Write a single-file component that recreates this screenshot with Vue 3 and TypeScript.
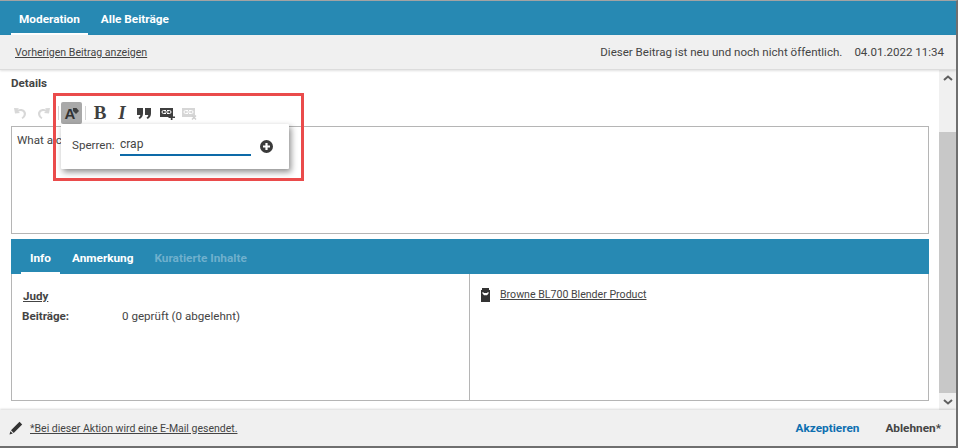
<script setup lang="ts">
const topTabs = [
  { label: 'Moderation', active: true },
  { label: 'Alle Beiträge', active: false },
]

const infoTabs = [
  { label: 'Info', active: true, disabled: false },
  { label: 'Anmerkung', active: false, disabled: false },
  { label: 'Kuratierte Inhalte', active: false, disabled: true },
]
</script>

<template>
  <div class="window">
    <header class="top-tabs">
      <a
        v-for="tab in topTabs"
        :key="tab.label"
        class="top-tab"
        :class="{ active: tab.active }"
      >{{ tab.label }}</a>
    </header>

    <div class="sub-bar">
      <a class="prev-link">Vorherigen Beitrag anzeigen</a>
      <div class="status">
        <span>Dieser Beitrag ist neu und noch nicht öffentlich.</span>
        <span>04.01.2022 11:34</span>
      </div>
    </div>

    <div class="scroll-area">
      <main class="content">
        <h2 class="details-title">Details</h2>

        <div class="toolbar">
          <button class="tool dim">
            <svg width="16" height="16" viewBox="0 0 16 16"><path d="M1 3l5 .2-1.500 1.500c1-.5 2-.7 3.200-.7 3.300 0 5.300 2.200 5.300 4.800 0 2.200-1.400 3.900-3.500 5.200l-1-1.400c1.300-.9 2.300-2 2.300-3.600 0-1.900-1.400-3.100-3.300-3.100-.8 0-1.500.2-2.100.6L7 8l-5 .5z" /></svg>
          </button>
          <button class="tool dim">
            <svg width="16" height="16" viewBox="0 0 16 16"><path d="M15 3l-5 .2 1.500 1.500c-1-.5-2-.7-3.200-.7C5 4 3 6.200 3 8.800c0 2.200 1.400 3.900 3.500 5.200l1-1.400c-1.300-.9-2.300-2-2.300-3.600 0-1.900 1.400-3.100 3.300-3.100.8 0 1.500.2 2.100.6L9 8l5 .5z" /></svg>
          </button>
          <span class="sep first"></span>
          <button class="tool selected">
            <span class="glyph-a">A</span>
            <svg class="glyph-tag" width="6" height="6" viewBox="0 0 6 6"><path d="M0 0h3.500L6 3 3 6 0 3z" /></svg>
          </button>
          <span class="sep second"></span>
          <button class="tool glyph-b">B</button>
          <button class="tool glyph-i">I</button>
          <button class="tool">
            <svg width="14" height="11" viewBox="0 0 14 11"><path d="M0 0h6v5.500C6 8 4.800 9.800 2.700 11L1.500 9.700C2.600 8.900 3.200 8 3.300 7H0zM8 0h6v5.500C14 8 12.800 9.800 10.700 11L9.500 9.700C10.600 8.900 11.200 8 11.300 7H8z" /></svg>
          </button>
          <button class="tool link-tool">
            <svg width="15" height="13" viewBox="0 0 15 13"><path d="M0 1h13v9H0z" /><path class="link-chain" d="M6 3.500H3.500a1.500 1.500 0 0 0 0 3H6M7 3.500h2.500a1.500 1.500 0 0 1 0 3H7M4.500 5h4" /><path d="M10.800 7.500h1.700v2H15v1.500h-2.500v2h-1.700v-2H8.500V9.500h2.300z" /></svg>
          </button>
          <button class="tool faint">
            <svg width="15" height="13" viewBox="0 0 15 13"><path d="M0 1h13v9H0z" /><path class="link-chain" d="M6 3.500H3.500a1.500 1.500 0 0 0 0 3H6M7 3.500h2.500a1.500 1.500 0 0 1 0 3H7M4.500 5h4" /><path class="x-mark" d="M10 8.500l4 4M14 8.500l-4 4" /></svg>
          </button>
        </div>

        <div class="editor">What a crap</div>

        <section class="info-panel">
          <nav class="info-tabs">
            <a
              v-for="tab in infoTabs"
              :key="tab.label"
              class="info-tab"
              :class="{ active: tab.active, disabled: tab.disabled }"
            >{{ tab.label }}</a>
          </nav>
          <div class="info-body">
            <div class="info-left">
              <a class="author">Judy</a>
              <div class="stat-row">
                <span class="stat-label">Beiträge:</span>
                <span>0 geprüft (0 abgelehnt)</span>
              </div>
            </div>
            <div class="info-right">
              <svg class="product-icon" width="9" height="14" viewBox="0 0 9 14"><path fill-rule="evenodd" d="M1 0h7v2h1v12H0V2h1zM1.500 4v1.500L3 7.200h3l1.500-1.700V4H6.500v1H2.500V4z" /></svg>
              <a class="product-link">Browne BL700 Blender Product</a>
            </div>
          </div>
        </section>
      </main>

      <div class="scrollbar">
        <svg class="arrow up" width="10" height="6" viewBox="0 0 10 6"><path d="M1 5l4-3.500L9 5" /></svg>
        <div class="track"><div class="thumb"></div></div>
        <svg class="arrow down" width="10" height="6" viewBox="0 0 10 6"><path d="M1 1l4 3.500L9 1" /></svg>
      </div>
    </div>

    <footer class="footer">
      <svg class="pencil" width="14" height="14" viewBox="0 0 14 14"><path d="M10.500.8l2.700 2.700-8.500 8.500L2 9.300z" /><path d="M1.400 10.200l2.400 2.400-3.300 1z" /></svg>
      <a class="mail-note">*Bei dieser Aktion wird eine E-Mail gesendet.</a>
      <div class="actions">
        <a class="accept">Akzeptieren</a>
        <a class="reject">Ablehnen*</a>
      </div>
    </footer>

    <div class="popover">
      <label class="block-label">Sperren:</label>
      <span class="block-input">crap</span>
      <svg class="plus" width="13" height="13" viewBox="0 0 13 13"><path fill-rule="evenodd" d="M6.500 0a6.500 6.500 0 1 0 0 13 6.500 6.500 0 0 0 0-13zM5.400 3h2.200v2.400H10v2.200H7.600V10H5.400V7.600H3V5.400h2.400z" /></svg>
    </div>

    <div class="highlight"></div>
  </div>
</template>

<style>
html,
body {
  margin: 0;
  background: #fff;
}
</style>

<style scoped>
.window {
  position: relative;
  box-sizing: border-box;
  width: 958px;
  height: 448px;
  display: flex;
  flex-direction: column;
  overflow: hidden;
  background: #fff;
  border-top: 1px solid #a3a3a3;
  border-right: 2px solid #6f6f6f;
  border-bottom: 2px solid #6f6f6f;
  font-family: Roboto, "Liberation Sans", sans-serif;
  font-size: 11.6px;
  color: #444;
}

.top-tabs {
  flex: none;
  height: 34px;
  display: flex;
  padding-left: 11px;
  background: #2789b3;
}

.top-tab {
  box-sizing: border-box;
  height: 34px;
  padding: 11px 8px 0;
  margin-right: 5px;
  color: #fff;
  font-size: 11.8px;
  font-weight: 700;
  white-space: nowrap;
}

.top-tab.active {
  border-bottom: 2px solid #fff;
}

.sub-bar {
  flex: none;
  height: 35px;
  box-sizing: border-box;
  display: flex;
  align-items: center;
  justify-content: space-between;
  padding: 0 12px 0 15px;
  background: #f0f0f0;
  border-bottom: 1px solid #dcdcdc;
  box-shadow: 0 1px 2px rgba(0, 0, 0, 0.12);
  position: relative;
  z-index: 1;
}

.prev-link {
  font-size: 10.6px;
  text-decoration: underline;
}

.status {
  display: flex;
  gap: 12px;
  font-size: 11.55px;
}

.scroll-area {
  flex: 1;
  min-height: 0;
  display: flex;
}

.content {
  flex: 1;
  min-width: 0;
  padding: 6px 10px 0 11px;
}

.details-title {
  margin: 0;
  font-size: 11.6px;
  line-height: 14px;
  font-weight: 700;
}

.toolbar {
  height: 22px;
  margin: 12px 0 0 -1px;
  display: flex;
  align-items: center;
}

.tool {
  position: relative;
  width: 22px;
  height: 22px;
  padding: 0;
  border: 0;
  border-radius: 2px;
  background: none;
  display: flex;
  align-items: center;
  justify-content: center;
  color: #3f3f3f;
  fill: #3f3f3f;
}

.tool.dim {
  fill: #d8d8d8;
}

.tool.faint {
  fill: #d6d6d6;
}

.tool.selected {
  width: 21px;
  background: #a9a9a9;
}

.link-tool {
  margin-left: 1px;
}

.link-chain {
  fill: none;
  stroke: #fff;
  stroke-width: 1;
}

.x-mark {
  fill: none;
  stroke: #d0d0d0;
  stroke-width: 1.500;
}

.glyph-a {
  font-size: 15px;
  font-weight: 700;
  margin-right: 3px;
  color: #333;
}

.glyph-tag {
  position: absolute;
  top: 6px;
  right: 3px;
}

.glyph-b {
  font-family: "Liberation Serif", serif;
  font-size: 19px;
  font-weight: 700;
}

.glyph-i {
  font-family: "Liberation Serif", serif;
  font-size: 19px;
  font-weight: 700;
  font-style: italic;
}

.sep {
  width: 1px;
  height: 14px;
  background: #d5d5d5;
}

.sep.first {
  margin: 0 2px 0 4px;
}

.sep.second {
  margin: 0 3px;
}

.editor {
  box-sizing: border-box;
  height: 108px;
  margin-top: 2px;
  padding: 6px 5px;
  border: 1px solid #b5b5b5;
  line-height: 15px;
}

.info-panel {
  margin-top: 5px;
  height: 162px;
  box-sizing: border-box;
  display: flex;
  flex-direction: column;
  border: 1px solid #b5b5b5;
  border-top: 0;
}

.info-tabs {
  flex: none;
  height: 35px;
  margin: 0 -1px;
  display: flex;
  padding-left: 10px;
  background: #2789b3;
}

.info-tab {
  box-sizing: border-box;
  height: 35px;
  padding: 12px 9px 0;
  margin-right: 3px;
  color: #fff;
  font-size: 11.8px;
  font-weight: 700;
  white-space: nowrap;
}

.info-tab.active {
  border-bottom: 2px solid #fff;
}

.info-tab.disabled {
  color: #6fb0cd;
}

.info-body {
  flex: 1;
  display: flex;
}

.info-left {
  width: 458px;
  box-sizing: border-box;
  padding: 15px 10px;
  border-right: 1px solid #b5b5b5;
}

.author {
  display: block;
  padding-left: 1px;
  font-weight: 700;
  text-decoration: underline;
  line-height: 14px;
}

.stat-row {
  display: flex;
  margin-top: 6px;
  line-height: 14px;
}

.stat-label {
  width: 100px;
  font-weight: 700;
}

.info-right {
  flex: 1;
  display: flex;
  align-items: flex-start;
  gap: 10px;
  padding: 14px 11px;
}

.product-icon {
  flex: none;
  fill: #333;
}

.product-link {
  font-size: 10.6px;
  line-height: 14px;
  text-decoration: underline;
}

.scrollbar {
  flex: none;
  width: 17px;
  display: flex;
  flex-direction: column;
  align-items: center;
  background: #f0f0f0;
}

.arrow {
  flex: none;
  fill: none;
  stroke: #5f5f5f;
  stroke-width: 2;
}

.arrow.up {
  margin: 5px 0 6px;
}

.arrow.down {
  margin: 6px 0 5px;
}

.track {
  flex: 1;
  width: 100%;
  padding-top: 45px;
  box-sizing: border-box;
  display: flex;
}

.thumb {
  flex: 1;
  background: #c8c8c8;
}

.footer {
  flex: none;
  height: 36px;
  box-sizing: border-box;
  display: flex;
  align-items: center;
  padding: 0 15px 0 9px;
  background: #f0f0f0;
  box-shadow: 0 -1px 2px rgba(0, 0, 0, 0.15);
  position: relative;
}

.pencil {
  flex: none;
  fill: #333;
}

.mail-note {
  margin-left: 7px;
  font-size: 10.5px;
  text-decoration: underline;
}

.actions {
  margin-left: auto;
  display: flex;
  gap: 26px;
  font-size: 11.8px;
  font-weight: 700;
}

.accept {
  color: #0d6fb0;
}

.popover {
  position: absolute;
  left: 61px;
  top: 123px;
  width: 228px;
  height: 45px;
  display: flex;
  align-items: flex-start;
  background: #fff;
  border-radius: 1px;
  box-shadow: 2px 3px 6px rgba(0, 0, 0, 0.45);
}

.block-label {
  flex: none;
  width: 48px;
  margin: 14px 0 0 11px;
  line-height: 14px;
}

.block-input {
  box-sizing: border-box;
  width: 131px;
  height: 32px;
  padding-top: 13px;
  line-height: 14px;
  font-size: 12px;
  border-bottom: 2px solid #0d6aa8;
}

.plus {
  margin: 16px 0 0 9px;
  fill: #3a3a3a;
}

.highlight {
  position: absolute;
  left: 53px;
  top: 92px;
  width: 251px;
  height: 88px;
  box-sizing: border-box;
  border: 3px solid #ea4b4b;
  pointer-events: none;
}
</style>
